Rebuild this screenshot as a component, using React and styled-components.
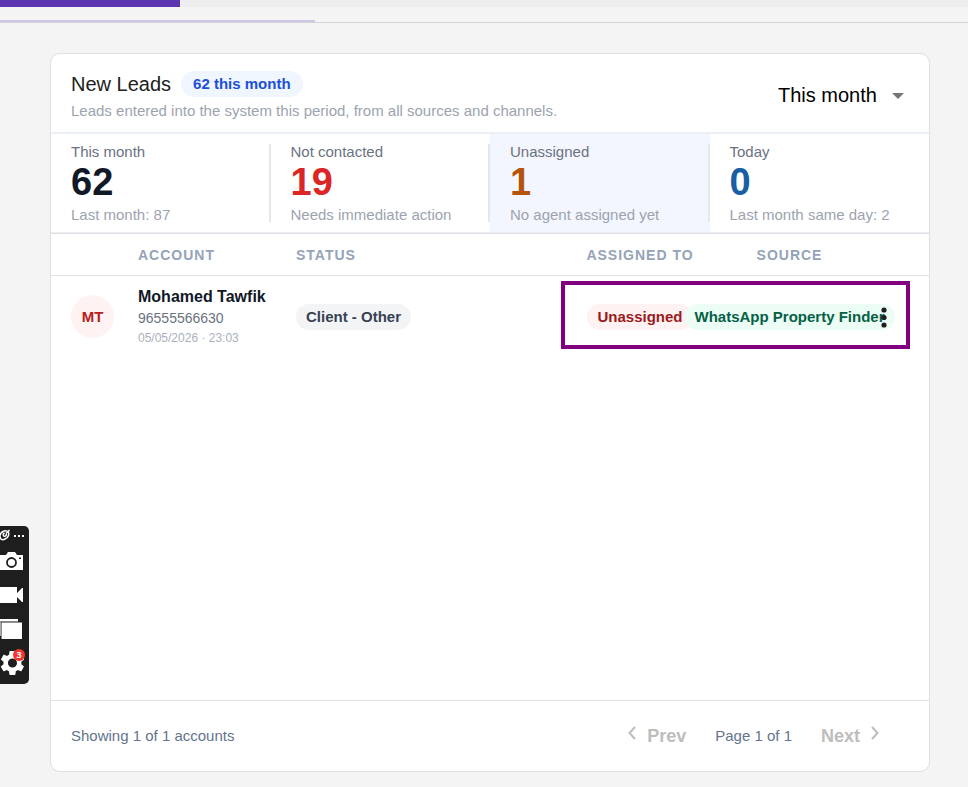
import React, { useState } from 'react';
import styled, { createGlobalStyle } from 'styled-components';

const GlobalStyle = createGlobalStyle`
  * {
    box-sizing: border-box;
  }
  body {
    margin: 0;
    background-color: #f4f4f4;
    font-family: "Liberation Sans", Arial, sans-serif;
    font-size: 15px;
    line-height: 18px;
  }
`;

const Page = styled.div`
  min-height: 100vh;
  display: flex;
  flex-direction: column;
`;

const TopBar = styled.div`
  height: 7px;
  margin-bottom: 13px;
  background-color: #ededed;
`;

const TopFill = styled.div`
  width: 180px;
  height: 100%;
  background-color: #5e35b1;
`;

const TabLine = styled.div`
  border-bottom: 1px solid #d3d3d3;
`;

const TabIndicator = styled.div`
  width: 315px;
  height: 2px;
  background-color: #d0c5e9;
`;

const Card = styled.main`
  flex: 1;
  display: flex;
  flex-direction: column;
  margin: 30px 38px 15px 50px;
  background-color: #fff;
  border: 1px solid #dfdfdf;
  border-radius: 10px;
`;

const Header = styled.header`
  display: flex;
  align-items: center;
  justify-content: space-between;
  padding: 17px 20px 12px;
  border-bottom: 2px solid #ebeff6;
`;

const TitleRow = styled.div`
  display: flex;
  align-items: center;
  gap: 10px;
  margin-bottom: 5px;
`;

const Title = styled.h1`
  margin: 0;
  font-size: 20px;
  line-height: 26px;
  font-weight: 400;
  color: #212121;
`;

const Pill = styled.span`
  flex: none;
  padding: 4px ${(props) => (props.$wide ? "12px" : "10px")};
  border-radius: 13px;
  font-weight: 700;
  white-space: nowrap;
  color: ${(props) => props.$color};
  background-color: ${(props) => props.$bg};
`;

const Subtitle = styled.p`
  margin: 0;
  color: #9ca3af;
`;

const Period = styled.div`
  position: relative;
  padding-bottom: 2px;
`;

const PeriodSelect = styled.select`
  display: block;
  appearance: none;
  padding: 0 32px 0 0;
  border: none;
  background: none;
  font-family: inherit;
  font-size: 20px;
  line-height: 26px;
  color: #000;
`;

const PeriodArrow = styled.svg`
  position: absolute;
  right: 5px;
  top: 11px;
  pointer-events: none;
`;

const Stats = styled.section`
  display: grid;
  grid-template-columns: repeat(4, 1fr);
  border-bottom: 1px solid #ebeff6;
`;

const StatCell = styled.div`
  position: relative;
  padding: 9px 20px 8px;
  background-color: ${(props) => (props.$active ? "#f3f6fe" : "transparent")};

  &:not(:last-child)::after {
    content: "";
    position: absolute;
    top: 10px;
    bottom: 10px;
    right: 0;
    width: 2px;
    background-color: #e5e7eb;
  }
`;

const StatLabel = styled.div`
  color: #6b7280;
`;

const StatValue = styled.div`
  margin-bottom: 3px;
  font-size: 38px;
  line-height: 42px;
  font-weight: 700;
  color: ${(props) => props.$color};
`;

const StatNote = styled.div`
  color: #9ca3af;
`;

const TableWrap = styled.div`
  position: relative;
  border-top: 1px solid #dfdfdf;
`;

const Table = styled.table`
  width: 100%;
  table-layout: fixed;
  border-spacing: 0;
`;

const Th = styled.th`
  width: ${(props) => props.$width};
  height: 42px;
  padding: 0 10px;
  border-bottom: 1px solid #e3e3e3;
  font-size: 14px;
  letter-spacing: 1px;
  text-align: ${(props) => props.$align || "left"};
  text-transform: uppercase;
  white-space: nowrap;
  color: #94a3b8;
`;

const Td = styled.td`
  height: 81px;
  padding: 0 ${(props) => (props.$flush ? "0" : "10px")};
`;

const PillCell = styled.div`
  display: flex;
  justify-content: ${(props) => props.$align || "center"};
`;

const Avatar = styled.div`
  width: 43px;
  height: 43px;
  margin-left: 10px;
  border-radius: 50%;
  font-weight: 700;
  line-height: 43px;
  text-align: center;
  color: #b91c1c;
  background-color: #fef2f2;
`;

const AccountName = styled.div`
  font-size: 16px;
  line-height: 22px;
  font-weight: 700;
  white-space: nowrap;
  color: #111827;
`;

const AccountPhone = styled.div`
  font-size: 14px;
  line-height: 20px;
  color: #6b7280;
`;

const AccountDate = styled.div`
  font-size: 12px;
  line-height: 20px;
  color: #a9b0bc;
`;

const MenuButton = styled.button`
  position: relative;
  display: flex;
  align-items: center;
  justify-content: center;
  width: 40px;
  height: 40px;
  padding: 0;
  border: none;
  background: none;
  color: #1f1f1f;
`;

const Highlight = styled.div`
  position: absolute;
  top: 47px;
  right: 19px;
  width: 349px;
  height: 68px;
  border: 4px solid #800080;
  pointer-events: none;
`;

const Footer = styled.footer`
  display: flex;
  align-items: center;
  justify-content: space-between;
  height: 71px;
  margin-top: auto;
  padding: 0 50px 0 20px;
  border-top: 1px solid #e3e3e3;
  color: #64748b;
`;

const Pager = styled.nav`
  display: flex;
  align-items: center;
  gap: 29px;
`;

const PageButton = styled.button`
  display: flex;
  align-items: flex-start;
  gap: 11px;
  padding: 0;
  border: none;
  background: none;
  font-family: inherit;
  font-size: 18px;
  line-height: 20px;
  font-weight: 700;
  color: #bdbdbd;
`;

const Recorder = styled.aside`
  position: fixed;
  left: 0;
  top: 526px;
  width: 29px;
  height: 158px;
  border-radius: 0 5px 5px 0;
  overflow: hidden;
  background-color: #1e1e1e;
`;

const RecorderButton = styled.button`
  position: relative;
  display: flex;
  align-items: center;
  width: 100%;
  height: ${(props) => (props.$small ? "18px" : "34px")};
  padding: 0;
  border: none;
  background: none;
`;

const Badge = styled.span`
  position: absolute;
  left: 13px;
  top: 3px;
  width: 12px;
  height: 12px;
  border-radius: 50%;
  font-family: "Open Sans", sans-serif;
  font-size: 9px;
  line-height: 12px;
  font-weight: 700;
  text-align: center;
  color: #fff;
  background-color: #f4362f;
`;

const stats = [
  { label: "This month", value: "62", note: "Last month: 87", color: "#111827" },
  { label: "Not contacted", value: "19", note: "Needs immediate action", color: "#dc2626" },
  { label: "Unassigned", value: "1", note: "No agent assigned yet", color: "#b45309", active: true },
  { label: "Today", value: "0", note: "Last month same day: 2", color: "#185fa5" },
];

const leads = [
  {
    initials: "MT",
    name: "Mohamed Tawfik",
    phone: "96555566630",
    date: "05/05/2026 · 23:03",
    status: "Client - Other",
    assigned: "Unassigned",
    source: "WhatsApp Property Finder",
  },
];

const Chevron = ({ d }) => (
  <svg width="8" height="14" viewBox="0 0 8 14" fill="none" stroke="currentColor" strokeWidth="2">
    <path d={d} />
  </svg>
);

const LeadRow = ({ lead }) => (
  <tr>
    <Td><Avatar>{lead.initials}</Avatar></Td>
    <Td>
      <AccountName>{lead.name}</AccountName>
      <AccountPhone>{lead.phone}</AccountPhone>
      <AccountDate>{lead.date}</AccountDate>
    </Td>
    <Td>
      <PillCell $align="flex-start"><Pill $color="#374151" $bg="#f3f4f6">{lead.status}</Pill></PillCell>
    </Td>
    <Td>
      <PillCell><Pill $color="#991b1b" $bg="#fef2f2">{lead.assigned}</Pill></PillCell>
    </Td>
    <Td>
      <PillCell><Pill $color="#065f46" $bg="#ecfdf5">{lead.source}</Pill></PillCell>
    </Td>
    <Td $flush>
      <MenuButton aria-label="Row actions">
        <svg width="6" height="22" viewBox="0 0 6 22" fill="currentColor">
          <circle cx="3" cy="4" r="2.6" />
          <circle cx="3" cy="11.5" r="2.6" />
          <circle cx="3" cy="19" r="2.6" />
        </svg>
      </MenuButton>
    </Td>
  </tr>
);

const RecorderPanel = () => (
  <Recorder>
    <RecorderButton $small aria-label="Options">
      <svg width="26" height="12" viewBox="0 0 26 12" fill="none">
        <g stroke="#fff" strokeWidth="1.5">
          <path d="M1 10C-1 7.500 0 4 3 2.500C5 1.500 8 1.500 8.500 3.500C9.500 6 7.500 9 5 10C3.500 10.800 2 11 1 10Z" />
          <path d="M4.500 4C2.800 4.800 2.800 7 4.300 7.300C6 7.500 7 5.500 6 4.500M6 4.500L9.500 1" />
        </g>
        <path d="M14 6h2v2h-2zM18 6h2v2h-2zM22 6h2v2h-2z" fill="#fff" />
      </svg>
    </RecorderButton>
    <RecorderButton aria-label="Take screenshot">
      <svg width="24" height="18" viewBox="0 0 24 18">
        <path d="M0 3H6L8 0H15L17 3H23V18H0Z" fill="#fff" />
        <circle cx="11.500" cy="10.500" r="4.500" fill="#fff" stroke="#1e1e1e" strokeWidth="1.800" />
        <path d="M19 5.500h2V7h-2z" fill="#1e1e1e" />
      </svg>
    </RecorderButton>
    <RecorderButton aria-label="Record video">
      <svg width="24" height="16" viewBox="0 0 24 16" fill="#fff">
        <path d="M0 0H17V6L22 1H23V15H22L17 10V16H0Z" />
      </svg>
    </RecorderButton>
    <RecorderButton aria-label="Gallery">
      <svg width="24" height="20" viewBox="0 0 24 20">
        <path d="M0 0H18V2H0Z" fill="#fff" />
        <path d="M0 2H18V3H0Z" fill="#888" />
        <path d="M0 3H1V17H0Z" fill="#aaa" />
        <path d="M1.500 3.500H22V20H1.500Z" fill="#fff" />
      </svg>
    </RecorderButton>
    <RecorderButton aria-label="Settings">
      <svg width="26" height="26" viewBox="1 0 24 24" fill="#fff">
        <path d="M20.700 13.100c.05-.36.08-.73.08-1.100s-.03-.74-.08-1.100l2.300-1.800c.2-.16.26-.45.13-.68l-2.200-3.840c-.13-.24-.42-.32-.66-.24l-2.720 1.100c-.56-.44-1.180-.8-1.850-1.080l-.4-2.900C15.250 1.200 15 1 14.700 1h-4.400c-.28 0-.5.2-.54.47l-.4 2.900c-.68.28-1.300.65-1.860 1.080l-2.720-1.100c-.24-.1-.53 0-.66.240L1.920 8.430c-.13.230-.080.52.130.68L4.300 10.900c-.05.360-.1.750-.1 1.100s.030.740.080 1.100l-2.300 1.800c-.2.160-.26.450-.13.680l2.200 3.840c.130.240.420.320.660.240l2.720-1.100c.56.440 1.180.8 1.850 1.080l.4 2.900c.060.270.290.460.570.460h4.400c.280 0 .520-.2.550-.470l.4-2.900c.68-.280 1.300-.650 1.850-1.080l2.720 1.100c.240.1.530 0 .660-.240l2.200-3.840c.130-.240.080-.520-.130-.680zM12.500 16.200a4.200 4.200 0 1 1 0-8.400 4.200 4.200 0 0 1 0 8.400z" />
      </svg>
      <Badge>3</Badge>
    </RecorderButton>
  </Recorder>
);

const App = () => {

  const [period, setPeriod] = useState("This month")

  return (
    <Page>
      <GlobalStyle />
      <TopBar><TopFill /></TopBar>
      <TabLine><TabIndicator /></TabLine>

      <Card>
        <Header>
          <div>
            <TitleRow>
              <Title>New Leads</Title>
              <Pill $wide $color="#1d4ed8" $bg="#eff6ff">62 this month</Pill>
            </TitleRow>
            <Subtitle>Leads entered into the system this period, from all sources and channels.</Subtitle>
          </div>
          <Period>
            <PeriodSelect aria-label="Period" value={period} onChange={(e) => setPeriod(e.target.value)}>
              <option>This month</option>
              <option>This week</option>
              <option>Today</option>
            </PeriodSelect>
            <PeriodArrow width="12" height="6" viewBox="0 0 12 6" fill="#757575">
              <path d="M0 0h12L6 6z" />
            </PeriodArrow>
          </Period>
        </Header>

        <Stats>
          {stats.map((stat) => (
            <StatCell key={stat.label} $active={stat.active}>
              <StatLabel>{stat.label}</StatLabel>
              <StatValue $color={stat.color}>{stat.value}</StatValue>
              <StatNote>{stat.note}</StatNote>
            </StatCell>
          ))}
        </Stats>

        <TableWrap>
          <Table>
            <thead>
              <tr>
                <Th $width="77px" aria-label="Avatar" />
                <Th $width="158px">Account</Th>
                <Th>Status</Th>
                <Th $width="150px" $align="center">Assigned to</Th>
                <Th $width="149px" $align="center">Source</Th>
                <Th $width="65px" aria-label="Actions" />
              </tr>
            </thead>
            <tbody>
              {leads.map((lead) => <LeadRow key={lead.phone} lead={lead} />)}
            </tbody>
          </Table>
          <Highlight />
        </TableWrap>

        <Footer>
          <span>Showing 1 of 1 accounts</span>
          <Pager aria-label="Pagination">
            <PageButton disabled>
              <Chevron d="M7 1L1.500 7L7 13" />
              Prev
            </PageButton>
            <span>Page 1 of 1</span>
            <PageButton disabled>
              Next
              <Chevron d="M1 1L6.500 7L1 13" />
            </PageButton>
          </Pager>
        </Footer>
      </Card>

      <RecorderPanel />
    </Page>
  )
}

export default App;
